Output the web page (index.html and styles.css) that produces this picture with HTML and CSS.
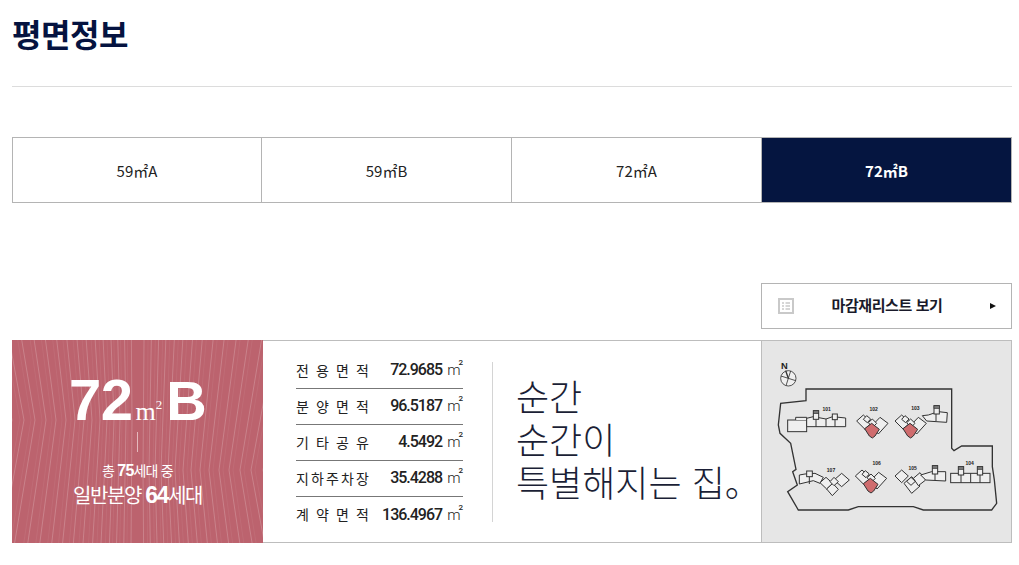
FILE: index.html
```html
<!DOCTYPE html>
<html lang="ko">
<head>
<meta charset="utf-8">
<title>평면정보</title>
<link rel="stylesheet" href="styles.css">
</head>
<body>
<main class="page">
  <header class="head"><h1 class="title">평면정보</h1></header>

  <nav class="tabs">
    <a class="tab">59㎡A</a>
    <a class="tab">59㎡B</a>
    <a class="tab">72㎡A</a>
    <a class="tab tab-on">72㎡B</a>
  </nav>

  <div class="actions">
    <a class="list-btn">
      <svg class="list-ico" viewBox="0 0 16 16" aria-hidden="true">
        <rect x="1" y="1" width="14" height="14" fill="#fff" stroke="#c9c9c9" stroke-width="2"/>
        <path d="M4 5h2M4 8h2M4 11h2M7.500 5h4.500M7.500 8h4.500M7.500 11h4.500" stroke="#c9c9c9" stroke-width="1.400"/>
      </svg>
      <span class="list-label">마감재리스트 보기</span>
      <span class="list-arrow"></span>
    </a>
  </div>

  <section class="card">
    <div class="type">
      <svg class="rays" viewBox="0 0 251 203" aria-hidden="true">
        <defs>
          <path id="fan" d="M118.900 -60L120 80L118.900 220M111.500 -60L114 80L111.500 220M104.100 -60L108 80L104.100 220M96.800 -60L102 80L96.800 220M88.200 -60L95 80L88.200 220M79.600 -60L88 80L79.600 220M69.800 -60L80 80L69.800 220M59.900 -60L72 80L59.900 220M48.900 -60L63 80L48.900 220M37.800 -60L54 80L37.800 220M25.600 -60L44 80L25.600 220M13.300 -60L34 80L13.300 220M-0.200 -60L23 80L-0.200 220M-13.700 -60L12 80L-13.700 220M-28.400 -60L0 80L-28.400 220M-43.200 -60L-12 80L-43.200 220"/>
        </defs>
        <use href="#fan" class="ray"/>
        <use href="#fan" class="ray ray-fine" transform="translate(-4 0)"/>
        <use href="#fan" class="ray" transform="translate(251 50) scale(-1 1)"/>
        <use href="#fan" class="ray ray-fine" transform="translate(255 50) scale(-1 1)"/>
      </svg>
      <div class="type-name"><span class="type-num">72</span><span class="type-unit">m<sup>2</sup></span><span class="type-num type-letter">B</span></div>
      <span class="type-rule"></span>
      <p class="type-total">총 <b>75</b>세대 중</p>
      <p class="type-sale">일반분양 <b>64</b>세대</p>
    </div>

    <div class="areas">
      <div class="area"><span class="area-name"><i>전</i><i>용</i><i>면</i><i>적</i></span><span class="area-val">72.9685<span class="m2">m<sup>2</sup></span></span></div>
      <div class="area"><span class="area-name"><i>분</i><i>양</i><i>면</i><i>적</i></span><span class="area-val">96.5187<span class="m2">m<sup>2</sup></span></span></div>
      <div class="area"><span class="area-name"><i>기</i><i>타</i><i>공</i><i>유</i></span><span class="area-val">4.5492<span class="m2">m<sup>2</sup></span></span></div>
      <div class="area"><span class="area-name"><i>지</i><i>하</i><i>주</i><i>차</i><i>장</i></span><span class="area-val">35.4288<span class="m2">m<sup>2</sup></span></span></div>
      <div class="area"><span class="area-name"><i>계</i><i>약</i><i>면</i><i>적</i></span><span class="area-val">136.4967<span class="m2">m<sup>2</sup></span></span></div>
    </div>

    <div class="slogan-wrap">
      <p class="slogan">순간<br>순간이<br>특별해지는 집。</p>
    </div>

    <div class="site">
      <svg class="site-map" viewBox="6 3 747 603" aria-label="단지 배치도">
        <defs>
          <g id="dia">
            <polygon class="b" points="290,243 310,225 335,248 315,268"/>
            <polygon class="b" points="360,232 384,250 355,282 335,258"/>
            <polygon class="b" points="320,227 332,237 322,248 310,238"/>
            <polygon class="b" points="337,237 350,250 338,262 325,248"/>
            <polygon class="pink" points="314,266 335,250 358,268 345,288 337,294 328,288"/>
          </g>
        </defs>
        <path class="bound" d="M138 147L575 147L575 325L582 332L605 318L697 318L697 380L703 420L710 490L695 510L490 510L460 500L295 500L265 510L115 510L83 455L112 435L98 395L108 388L92 310L60 280L55 255L62 190L138 182Z"/>
        <g class="compass">
          <circle cx="85" cy="115" r="23"/>
          <path d="M63 108L107 122M78 137L92 93"/>
          <path class="needle" d="M77 92L85 115"/>
        </g>
        <text class="north" x="73" y="87">N</text>

        <rect class="b" x="83" y="240" width="57" height="35"/>
        <path class="b" d="M107 240L107 232L140 232L140 240"/>
        <path class="b" d="M140 260L140 235L160 230L198 237L218 230L257 234L257 260Z"/>
        <path class="ln" d="M168 238L168 260M198 237L198 260M225 238L225 260"/>
        <rect class="b" x="160" y="212" width="16" height="26"/>
        <rect class="dk" x="160" y="212" width="16" height="9"/>
        <rect class="b" x="217" y="222" width="15" height="17"/>

        <use href="#dia"/>
        <use href="#dia" transform="translate(115 0)"/>
        <use href="#dia" transform="translate(-4 165)"/>

        <path class="b" d="M487 227L500 243L560 247L562 218L535 215L505 225Z"/>
        <path class="ln" d="M528 222L528 243"/>
        <rect class="b" x="522" y="197" width="16" height="25"/>
        <rect class="dk" x="522" y="197" width="16" height="8"/>

        <polygon class="b" points="405,408 425,390 445,408 425,428"/>
        <polygon class="b" points="432,430 455,410 480,438 455,460"/>
        <polygon class="b" points="460,415 480,398 497,420 475,437"/>
        <polygon class="b" points="440,424 453,412 466,424 453,436"/>
        <path class="b" d="M482 405L515 395L557 395L557 423L497 420Z"/>
        <path class="ln" d="M525 395L525 420"/>
        <rect class="b" x="517" y="377" width="16" height="25"/>
        <rect class="dk" x="517" y="377" width="16" height="8"/>

        <rect class="b" x="572" y="400" width="118" height="28"/>
        <path class="ln" d="M603 405L603 428M632 400L632 428M660 405L660 428"/>
        <rect class="b" x="595" y="380" width="16" height="25"/>
        <rect class="dk" x="595" y="380" width="16" height="8"/>
        <rect class="b" x="652" y="380" width="16" height="25"/>
        <rect class="dk" x="652" y="380" width="16" height="8"/>

        <path class="b" d="M118 405L135 402L165 400L190 412L180 430L160 422L118 432Z"/>
        <path class="ln" d="M148 410L148 432"/>
        <rect class="b" x="140" y="393" width="17" height="17"/>
        <polygon class="b" points="180,428 198,412 218,430 200,447"/>
        <polygon class="b" points="200,447 218,430 235,448 217,467"/>
        <polygon class="b" points="222,420 245,400 268,420 245,440"/>
        <polygon class="b" points="210,425 222,412 235,425 222,437"/>

        <text class="no" x="200" y="212">101</text>
        <text class="no" x="341" y="212">102</text>
        <text class="no" x="466" y="211">103</text>
        <text class="no" x="629" y="375">104</text>
        <text class="no" x="458" y="389">105</text>
        <text class="no" x="350" y="375">106</text>
        <text class="no" x="213" y="397">107</text>
      </svg>
    </div>
  </section>
</main>
</body>
</html>
```

FILE: styles.css
```css
* { box-sizing: border-box; }

html, body { margin: 0; padding: 0; background: #fff; }

body {
  font-family: "Noto Sans CJK KR", "Noto Sans", sans-serif;
  color: #222;
}

.page { padding: 0 7px 0 12px; height: 565px; overflow: hidden; }

.head { height: 87px; border-bottom: 1px solid #dcdcdc; padding-top: 11px; }

.title {
  margin: 0;
  font-size: 32px;
  line-height: 44px;
  font-weight: 700;
  letter-spacing: -0.4px;
  color: #051340;
}

.tabs {
  display: grid;
  grid-template-columns: 248px 250px 250px 1fr;
  margin-top: 50px;
  height: 66px;
  border: 1px solid #b4b4b4;
}

.tab {
  display: flex;
  align-items: center;
  justify-content: center;
  font-size: 15px;
  color: #222;
  border-left: 1px solid #b4b4b4;
}

.tab:first-child { border-left: 0; }

.tab-on { background: #051540; color: #fff; font-weight: 700; }

.actions { display: flex; justify-content: flex-end; margin-top: 80px; }

.list-btn {
  display: flex;
  align-items: center;
  width: 251px;
  height: 46px;
  padding: 0 15px 0 16px;
  border: 1px solid #b4b4b4;
}

.list-ico { width: 16px; height: 16px; flex: none; }

.list-label {
  flex: 1;
  padding: 0 10px 3px 0;
  text-align: center;
  font-size: 15px;
  line-height: 22px;
  font-weight: 700;
  letter-spacing: -0.4px;
  color: #1a1a2a;
}

.list-arrow {
  width: 0;
  height: 0;
  border-left: 6px solid #111;
  border-top: 3.500px solid transparent;
  border-bottom: 3.500px solid transparent;
}

.card {
  display: flex;
  height: 203px;
  margin-top: 11px;
  border-top: 1px solid #bdbdbd;
  border-bottom: 1px solid #bdbdbd;
}

.type {
  position: relative;
  flex: none;
  width: 251px;
  margin: -1px 0;
  height: 203px;
  background: #bc636e;
  color: #fff;
  display: flex;
  flex-direction: column;
  align-items: center;
  overflow: hidden;
  padding-top: 31px;
}

.rays { position: absolute; inset: 0; width: 100%; height: 100%; }

.ray { fill: none; stroke: #fff; stroke-opacity: 0.2; stroke-width: 1; }

.ray-fine { stroke-opacity: 0.06; }

.type-name, .type-rule, .type-total, .type-sale { position: relative; }

.type-name {
  display: flex;
  align-items: baseline;
  height: 58px;
  line-height: 58px;
  font-family: "Liberation Sans", sans-serif;
}

.type-num { font-size: 58px; font-weight: 700; letter-spacing: -0.5px; }

.type-letter { font-size: 56px; }

.type-unit {
  font-family: "Liberation Serif", serif;
  font-size: 26px;
  margin: 0 4px 0 3px;
}

.type-unit sup { font-size: 13px; line-height: 0; vertical-align: 11px; }

.type-rule { width: 1px; height: 20px; margin-top: 3px; background: #e5b9bd; }

.type-total {
  margin: 8px 0 0;
  font-size: 14px;
  line-height: 20px;
  letter-spacing: -0.8px;
}

.type-sale {
  margin: 0;
  font-size: 20px;
  line-height: 28px;
  letter-spacing: -1.4px;
}

.type-total b, .type-sale b { font-family: "Liberation Sans", sans-serif; font-weight: 700; }

.type-total b { font-size: 16px; }

.type-sale b { font-size: 23px; }

.areas {
  flex: none;
  margin-left: 33px;
  width: 167px;
  padding-top: 12px;
}

.area {
  display: flex;
  align-items: center;
  justify-content: space-between;
  height: 36px;
  padding-bottom: 2px;
  border-bottom: 1px solid #777;
}

.area:last-child { border-bottom: 0; }

.area-name {
  display: flex;
  justify-content: space-between;
  width: 73px;
  font-size: 14px;
  color: #222;
}

.area-name i { font-style: normal; }

.area-val {
  font-family: Roboto, sans-serif;
  font-size: 16px;
  font-weight: 500;
  letter-spacing: -1px;
  color: #222;
  white-space: nowrap;
}

.m2 { font-weight: 300; font-size: 15px; margin-left: 5px; letter-spacing: 0; }

.m2 sup { font-size: 8px; font-weight: 500; line-height: 0; vertical-align: 10px; margin-left: -2px; }

.slogan-wrap { flex: 1; padding-top: 21px; margin-left: 29px; }

.slogan {
  margin: 0;
  height: 160px;
  padding: 12px 0 0 23px;
  border-left: 1px solid #d4d4d4;
  font-size: 36px;
  line-height: 43px;
  font-weight: 200;
  color: #1b1f36;
  white-space: nowrap;
}

.site {
  flex: none;
  width: 251px;
  margin: -1px 0;
  height: 203px;
  background: #e6e6e6;
  border: 1px solid #bdbdbd;
}

.site-map { display: block; width: 100%; height: 100%; }

.bound { fill: none; stroke: #333; stroke-width: 4; }

.compass circle, .compass path { fill: #f0f0f0; stroke: #333; stroke-width: 2.500; }

.compass .needle { stroke-width: 4; }

.north {
  font-family: "Liberation Sans", sans-serif;
  font-size: 28px;
  font-weight: 700;
  fill: #222;
  text-anchor: middle;
}

.b { fill: #efefef; stroke: #333; stroke-width: 3; }

.ln { fill: none; stroke: #333; stroke-width: 3; }

.dk { fill: #777; stroke: #333; stroke-width: 2; }

.pink { fill: #cf6c6e; stroke: #333; stroke-width: 3; }

.no {
  font-family: "Liberation Sans", sans-serif;
  font-size: 15px;
  font-weight: 700;
  fill: #222;
  text-anchor: middle;
}
```
